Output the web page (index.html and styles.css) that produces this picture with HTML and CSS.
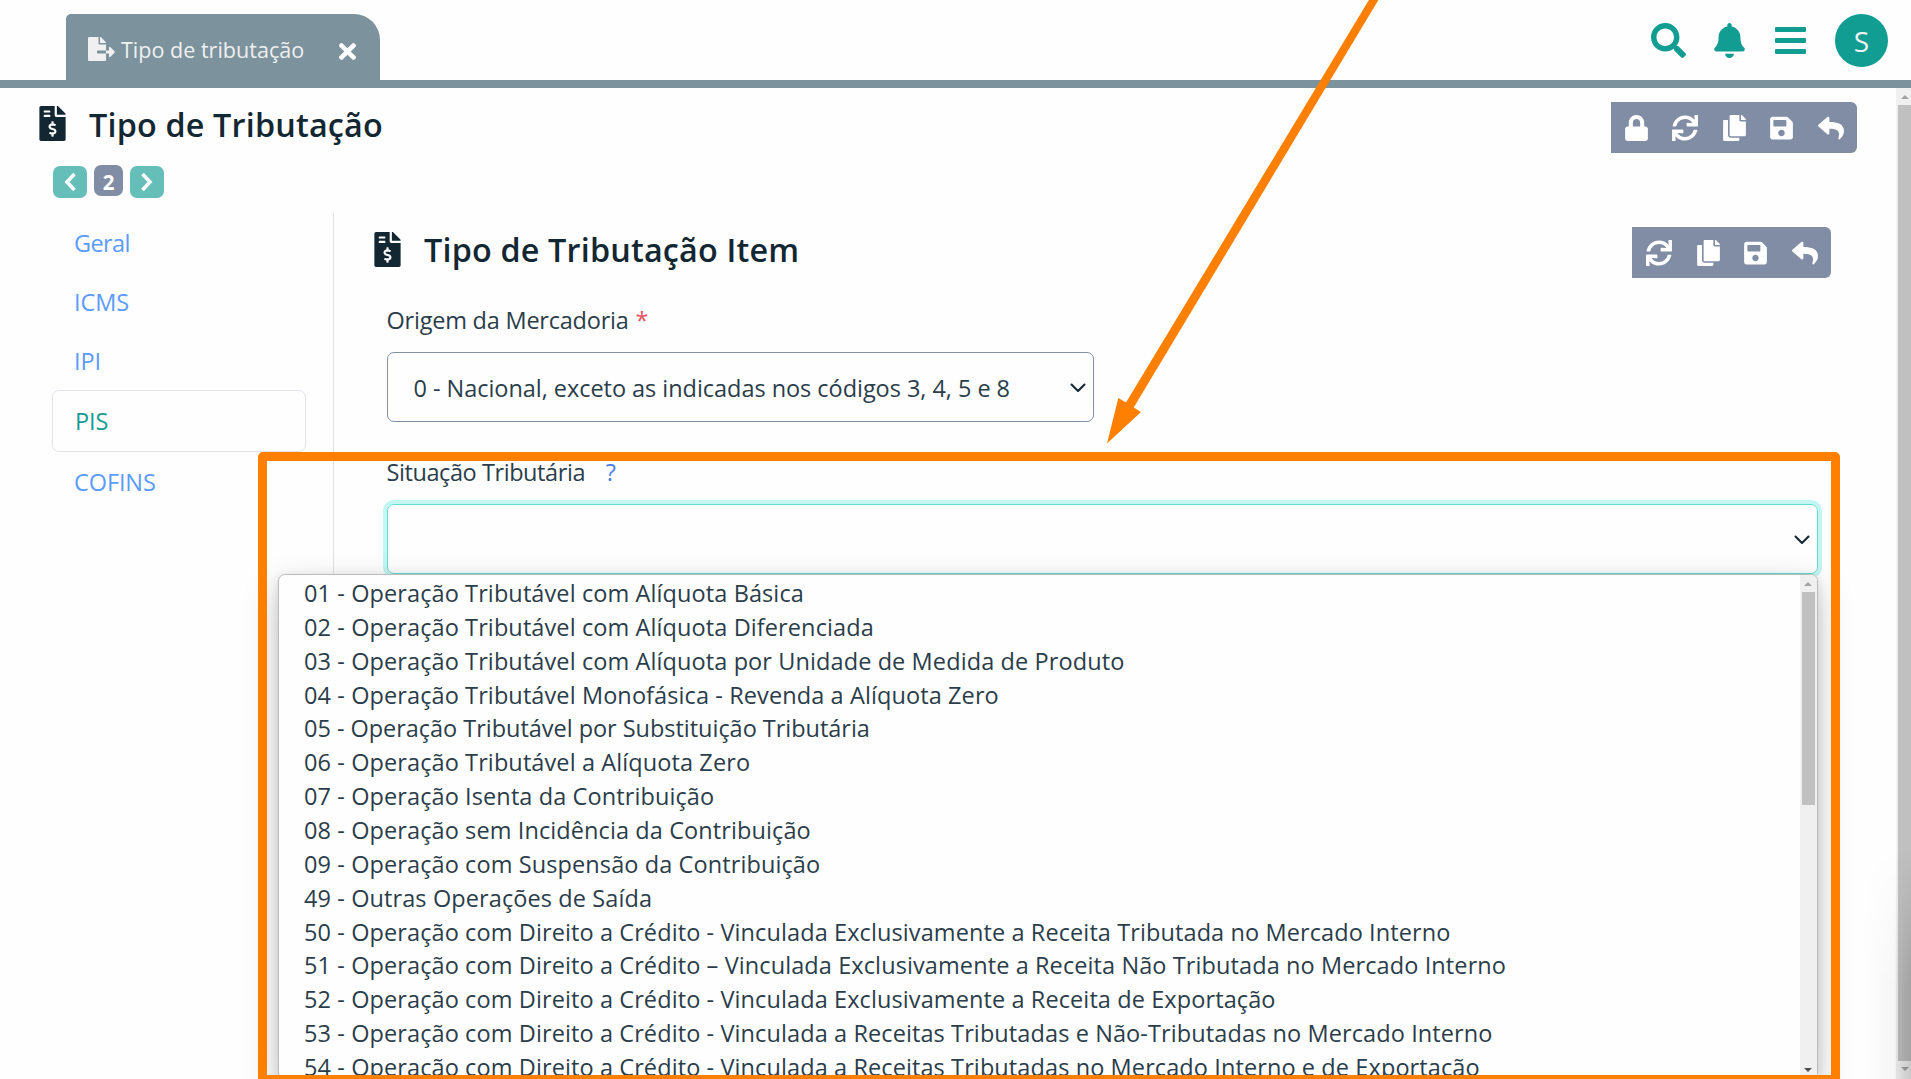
FILE: index.html
```
<!DOCTYPE html>
<html lang="pt-BR">
<head>
<meta charset="utf-8">
<title>Tipo de Tributação</title>
<link rel="stylesheet" href="styles.css">
</head>
<body>
<svg class="symbols" aria-hidden="true">
  <symbol id="i-export" viewBox="0 0 576 512"><path d="M384 121.900c0-6.300-2.500-12.400-7-16.900L279.100 7c-4.500-4.500-10.600-7-17-7H256v128h128zM571 308l-95.700-96.400c-10.100-10.100-27.400-3-27.400 11.300V288h-64v64h64v65.200c0 14.300 17.300 21.400 27.400 11.300L571 332c6.600-6.600 6.600-17.400 0-24zm-379 28v-32c0-8.800 7.200-16 16-16h176V160H248c-13.200 0-24-10.800-24-24V0H24C10.700 0 0 10.700 0 24v464c0 13.300 10.700 24 24 24h336c13.300 0 24-10.700 24-24V352H208c-8.800 0-16-7.200-16-16z"/></symbol>
  <symbol id="i-invoice" viewBox="0 0 384 512"><path d="M377 105L279.100 7c-4.500-4.500-10.600-7-17-7H256v128h128v-6.100c0-6.300-2.500-12.400-7-16.900zm-153 31V0H24C10.700 0 0 10.700 0 24v464c0 13.300 10.700 24 24 24h336c13.300 0 24-10.700 24-24V160H248c-13.200 0-24-10.800-24-24zM64 72c0-4.420 3.580-8 8-8h80c4.420 0 8 3.580 8 8v16c0 4.420-3.580 8-8 8H72c-4.420 0-8-3.580-8-8V72zm0 80v-16c0-4.420 3.580-8 8-8h80c4.420 0 8 3.580 8 8v16c0 4.420-3.580 8-8 8H72c-4.420 0-8-3.580-8-8zm144 263.880V440c0 4.420-3.580 8-8 8h-16c-4.420 0-8-3.580-8-8v-24.290c-11.290-.58-22.270-4.520-31.370-11.350-3.900-2.930-4.100-8.770-.57-12.140l11.750-11.210c2.770-2.640 6.890-2.760 10.130-.73 3.870 2.420 8.260 3.720 12.820 3.720h28.110c6.500 0 11.800-5.920 11.800-13.190 0-5.950-3.610-11.190-8.770-12.730l-45-13.500c-18.590-5.580-31.580-23.420-31.580-43.390 0-24.520 19.050-44.440 42.670-45.070V232c0-4.420 3.580-8 8-8h16c4.420 0 8 3.580 8 8v24.290c11.290.58 22.270 4.510 31.370 11.350 3.900 2.930 4.100 8.770.57 12.140l-11.750 11.210c-2.770 2.640-6.890 2.760-10.130.73-3.870-2.430-8.260-3.720-12.820-3.720h-28.110c-6.500 0-11.800 5.920-11.800 13.190 0 5.950 3.610 11.190 8.770 12.730l45 13.500c18.590 5.580 31.580 23.420 31.580 43.390 0 24.530-19.050 44.440-42.670 45.070z"/></symbol>
  <symbol id="i-times" viewBox="0 80 352 352"><path d="M242.720 256l100.070-100.070c12.280-12.280 12.280-32.190 0-44.480l-22.240-22.240c-12.280-12.280-32.190-12.280-44.480 0L176 189.280 75.930 89.210c-12.280-12.280-32.190-12.280-44.480 0L9.210 111.450c-12.280 12.280-12.280 32.190 0 44.480L109.280 256 9.210 356.070c-12.280 12.280-12.280 32.190 0 44.480l22.240 22.240c12.280 12.280 32.200 12.280 44.480 0L176 322.720l100.070 100.070c12.280 12.280 32.200 12.280 44.480 0l22.240-22.240c12.280-12.280 12.280-32.190 0-44.480z"/></symbol>
  <symbol id="i-search" viewBox="0 0 512 512"><path d="M505 442.700L405.300 343c-4.500-4.500-10.600-7-17-7H372c27.600-35.300 44-79.700 44-128C416 93.100 322.900 0 208 0S0 93.100 0 208s93.100 208 208 208c48.300 0 92.700-16.400 128-44v16.300c0 6.400 2.500 12.500 7 17l99.700 99.700c9.400 9.400 24.600 9.400 33.900 0l28.300-28.300c9.400-9.400 9.400-24.600.1-34zM208 336c-70.700 0-128-57.200-128-128 0-70.700 57.200-128 128-128 70.700 0 128 57.200 128 128 0 70.700-57.200 128-128 128z"/></symbol>
  <symbol id="i-bell" viewBox="0 0 448 512"><path d="M224 512c35.320 0 63.970-28.650 63.970-64H160.030c0 35.350 28.650 64 63.970 64zm215.390-149.710c-19.320-20.760-55.470-51.990-55.470-154.290 0-77.700-54.480-139.900-127.940-155.160V32c0-17.670-14.320-32-31.980-32s-31.980 14.330-31.980 32v20.840C118.560 68.100 64.080 130.300 64.080 208c0 102.300-36.150 133.530-55.470 154.290-6 6.450-8.660 14.160-8.610 21.710.11 16.400 12.980 32 32.100 32h383.800c19.120 0 32-15.600 32.100-32 .05-7.550-2.610-15.270-8.610-21.710z"/></symbol>
  <symbol id="i-bars" viewBox="0 0 31 27"><path d="M1 0h29q1 0 1 1v3q0 1-1 1H1q-1 0-1-1V1q0-1 1-1zM1 11h29q1 0 1 1v3q0 1-1 1H1q-1 0-1-1v-3q0-1 1-1zM1 22h29q1 0 1 1v3q0 1-1 1H1q-1 0-1-1v-3q0-1 1-1z"/></symbol>
  <symbol id="i-lock" viewBox="0 0 448 512"><path d="M400 224h-24v-72C376 68.200 307.800 0 224 0S72 68.200 72 152v72H48c-26.500 0-48 21.500-48 48v192c0 26.500 21.500 48 48 48h352c26.500 0 48-21.500 48-48V272c0-26.500-21.500-48-48-48zm-104 0H152v-72c0-39.700 32.300-72 72-72s72 32.300 72 72v72z"/></symbol>
  <symbol id="i-sync" viewBox="0 0 512 512"><path d="M440.650 12.570l4 82.770A247.160 247.160 0 0 0 255.830 8C134.730 8 33.910 94.920 12.290 209.820A12 12 0 0 0 24.090 224h49.050a12 12 0 0 0 11.670-9.260 175.910 175.910 0 0 1 317-56.940l-101.460-4.860a12 12 0 0 0-12.570 12v47.410a12 12 0 0 0 12 12H500a12 12 0 0 0 12-12V12a12 12 0 0 0-12-12h-47.370a12 12 0 0 0-11.980 12.570zM255.830 432a175.610 175.610 0 0 1-146-77.800l101.800 4.870a12 12 0 0 0 12.570-12v-47.400a12 12 0 0 0-12-12H12a12 12 0 0 0-12 12V500a12 12 0 0 0 12 12h47.350a12 12 0 0 0 12-12.600l-4.150-82.570A247.170 247.170 0 0 0 255.830 504c121.110 0 221.930-86.920 243.550-201.820a12 12 0 0 0-11.800-14.180h-49.050a12 12 0 0 0-11.670 9.260A175.860 175.860 0 0 1 255.830 432z"/></symbol>
  <symbol id="i-copy" viewBox="0 0 448 512"><path d="M320 448v40c0 13.255-10.745 24-24 24H24c-13.255 0-24-10.745-24-24V120c0-13.255 10.745-24 24-24h72v296c0 30.879 25.121 56 56 56h168zm0-344V0H152c-13.255 0-24 10.745-24 24v368c0 13.255 10.745 24 24 24h272c13.255 0 24-10.745 24-24V128H344c-13.200 0-24-10.800-24-24zm120.971-31.029L375.029 7.029A24 24 0 0 0 358.059 0H352v96h96v-6.059a24 24 0 0 0-7.029-16.970z"/></symbol>
  <symbol id="i-save" viewBox="0 0 448 512"><path d="M433.941 129.941l-83.882-83.882A48 48 0 0 0 316.118 32H48C21.490 32 0 53.490 0 80v352c0 26.510 21.490 48 48 48h352c26.510 0 48-21.490 48-48V163.882a48 48 0 0 0-14.059-33.941zM224 416c-35.346 0-64-28.654-64-64 0-35.346 28.654-64 64-64s64 28.654 64 64c0 35.346-28.654 64-64 64zm96-304.520V212c0 6.627-5.373 12-12 12H76c-6.627 0-12-5.373-12-12V108c0-6.627 5.373-12 12-12h228.520c3.183 0 6.235 1.264 8.485 3.515l3.480 3.480A11.996 11.996 0 0 1 320 111.480z"/></symbol>
  <symbol id="i-reply" viewBox="0 0 512 512"><path d="M8.309 189.836L184.313 37.851C199.719 24.546 224 35.347 224 56.015v80.053c160.629 1.839 288 34.032 288 186.258 0 61.441-39.581 122.309-83.333 154.132-13.653 9.931-33.111-2.533-28.077-18.631 45.344-145.012-21.507-183.510-176.590-185.742V360c0 20.700-24.300 31.453-39.687 18.164l-176.004-152c-11.071-9.562-11.086-26.753 0-36.328z"/></symbol>
  <symbol id="i-down" viewBox="0 0 16 10"><path d="M1.500 1.500L8 8l6.500-6.500" fill="none" stroke="currentColor" stroke-width="2.100" stroke-linecap="round" stroke-linejoin="round"/></symbol>
  <symbol id="i-left" viewBox="0 0 12 20"><path d="M10.500 2L3 10l7.500 8" fill="none" stroke="currentColor" stroke-width="3.600"/></symbol>
  <symbol id="i-right" viewBox="0 0 12 20"><path d="M1.500 2L9 10l-7.500 8" fill="none" stroke="currentColor" stroke-width="3.600"/></symbol>
</svg>

<header class="topbar">
  <div class="tab">
    <svg class="tab-icon"><use href="#i-export"/></svg>
    <span class="tab-label">Tipo de tributação</span>
    <svg class="tab-close"><use href="#i-times"/></svg>
  </div>
  <div class="actions">
    <svg class="ico-search"><use href="#i-search"/></svg>
    <svg class="ico-bell"><use href="#i-bell"/></svg>
    <svg class="ico-bars"><use href="#i-bars"/></svg>
    <span class="avatar">S</span>
  </div>
</header>

<div class="page">
  <main class="main">
    <div class="heading">
      <svg class="heading-icon"><use href="#i-invoice"/></svg>
      <h1 class="title">Tipo de Tributação</h1>
      <div class="toolbar">
        <svg class="w22"><use href="#i-lock"/></svg>
        <svg class="w26"><use href="#i-sync"/></svg>
        <svg class="w22"><use href="#i-copy"/></svg>
        <svg class="w22"><use href="#i-save"/></svg>
        <svg class="w26"><use href="#i-reply"/></svg>
      </div>
    </div>
    <div class="pager">
      <span class="pager-btn"><svg><use href="#i-left"/></svg></span>
      <span class="pager-num">2</span>
      <span class="pager-btn"><svg><use href="#i-right"/></svg></span>
    </div>
    <div class="columns">
      <nav class="side">
        <a class="side-link">Geral</a>
        <a class="side-link">ICMS</a>
        <a class="side-link">IPI</a>
        <a class="side-link active">PIS</a>
        <a class="side-link">COFINS</a>
      </nav>
      <section class="detail">
        <div class="heading sub">
          <svg class="heading-icon"><use href="#i-invoice"/></svg>
          <h2 class="title">Tipo de Tributação Item</h2>
          <div class="toolbar">
            <svg class="w26"><use href="#i-sync"/></svg>
            <svg class="w22"><use href="#i-copy"/></svg>
            <svg class="w22"><use href="#i-save"/></svg>
            <svg class="w26"><use href="#i-reply"/></svg>
          </div>
        </div>
        <div class="form">
          <div class="label">Origem da Mercadoria <span class="required">*</span></div>
          <div class="select short"><span class="value">0 - Nacional, exceto as indicadas nos códigos 3, 4, 5 e 8</span><svg class="caret"><use href="#i-down"/></svg></div>
          <div class="label second">Situação Tributária <span class="help">?</span></div>
          <div class="select focus"><svg class="caret"><use href="#i-down"/></svg>
            <div class="options">
              <ul class="option-list">
                <li>01 - Operação Tributável com Alíquota Básica</li>
                <li>02 - Operação Tributável com Alíquota Diferenciada</li>
                <li>03 - Operação Tributável com Alíquota por Unidade de Medida de Produto</li>
                <li>04 - Operação Tributável Monofásica - Revenda a Alíquota Zero</li>
                <li class="tight">05 - Operação Tributável por Substituição Tributária</li>
                <li>06 - Operação Tributável a Alíquota Zero</li>
                <li>07 - Operação Isenta da Contribuição</li>
                <li>08 - Operação sem Incidência da Contribuição</li>
                <li>09 - Operação com Suspensão da Contribuição</li>
                <li>49 - Outras Operações de Saída</li>
                <li>50 - Operação com Direito a Crédito - Vinculada Exclusivamente a Receita Tributada no Mercado Interno</li>
                <li>51 - Operação com Direito a Crédito – Vinculada Exclusivamente a Receita Não Tributada no Mercado Interno</li>
                <li>52 - Operação com Direito a Crédito - Vinculada Exclusivamente a Receita de Exportação</li>
                <li>53 - Operação com Direito a Crédito - Vinculada a Receitas Tributadas e Não-Tributadas no Mercado Interno</li>
                <li>54 - Operação com Direito a Crédito - Vinculada a Receitas Tributadas no Mercado Interno e de Exportação</li>
              </ul>
              <div class="scroll">
                <i class="up"></i><i class="thumb"></i><i class="down dark"></i>
              </div>
            </div>
          </div>
          <div class="select third"></div>
        </div>
      </section>
    </div>
  </main>
  <div class="scroll page-scroll">
    <i class="up"></i><i class="thumb"></i><i class="down"></i>
  </div>
</div>

<div class="edge-shade"></div>
<div class="frame"></div>
<svg class="arrow" viewBox="0 0 300 460"><path d="M269.500-1L26 402.600l-7.700-4.700L7 443.400l34-31.300-7.300-4.500L279-1z"/></svg>
</body>
</html>
```
FILE: styles.css
```
* { box-sizing: border-box; }

body {
  margin: 0;
  width: 1911px;
  height: 1079px;
  overflow: hidden;
  position: relative;
  display: flex;
  flex-direction: column;
  background: #fefefe;
  color: #2b3d4a;
  font: 23.5px/34px "Open Sans", "Noto Sans", sans-serif;
}

svg { display: block; fill: currentColor; flex: none; }
.symbols { position: absolute; width: 0; height: 0; }

/* Top bar */
.topbar {
  height: 88px;
  flex: none;
  display: flex;
  justify-content: space-between;
  padding: 14px 23px 0 66px;
  border-bottom: 8px solid #7c929d;
}
.tab {
  width: 314px;
  height: 66px;
  display: flex;
  align-items: center;
  padding: 4px 24px 0 22px;
  border-radius: 5px 26px 0 0;
  background: #7c929d;
  color: #f0f0f0;
}
.tab-icon { width: 27px; height: 24px; margin: 0 6px 0 0; }
.tab-label { font-size: 21.56px; flex: 1; white-space: nowrap; padding-top: 1px; }
.tab-close { width: 17px; height: 17px; color: #fff; margin-top: 4px; }
.actions { display: flex; align-items: flex-start; color: #129d92; }
.ico-search { width: 35px; height: 35px; margin: 9px 28px 0 0; }
.ico-bell { width: 31px; height: 35px; margin: 9px 30px 0 0; }
.ico-bars { width: 31px; height: 27px; margin: 13px 29px 0 0; }
.avatar {
  width: 53px;
  height: 53px;
  border-radius: 50%;
  background: #129d92;
  color: #f2f2f2;
  text-align: center;
  font-size: 28px;
  line-height: 55px;
}

/* Page */
.page { flex: 1; display: flex; min-height: 0; }
.main { flex: 1; min-width: 0; display: flex; flex-direction: column; padding: 14px 39px 0 39px; }
.heading { display: flex; height: 51px; align-items: flex-start; color: #132733; }
.heading-icon { width: 27px; height: 35px; margin: 4px 23px 0 0; }
.title {
  margin: 0;
  flex: 1;
  font-size: 32.34px;
  font-weight: 600;
  letter-spacing: .18px;
  line-height: 44px;
}
.toolbar {
  display: flex;
  align-items: center;
  height: 51px;
  gap: 24.6px;
  padding: 0 13px 0 14px;
  border-radius: 0 6px 6px 0;
  background: #818da4;
  color: #fff;
}
.toolbar svg { height: 26px; }
.w22 { width: 23px; }
.w26 { width: 26px; }

.pager { display: flex; gap: 7px; height: 60px; padding: 12px 0 0 14px; color: #fff; }
.pager-btn {
  display: flex;
  align-items: center;
  justify-content: center;
  width: 34px;
  height: 32px;
  margin-top: 1px;
  border-radius: 7px;
  background: #65beb7;
}
.pager-btn svg { width: 12px; height: 20px; }
.pager-num {
  width: 29px;
  height: 31px;
  border-radius: 7px;
  background: #818da4;
  text-align: center;
  font-size: 20.5px;
  font-weight: 700;
  line-height: 34px;
}

.columns { flex: 1; display: flex; min-height: 0; }
.side { width: 295px; padding: 0 27px 0 13px; border-right: 1px solid #dfe1e4; }
.side-link {
  display: block;
  height: 59px;
  padding-left: 22px;
  line-height: 61px;
  letter-spacing: -.1px;
  color: #5c9bff;
}
.side-link:first-child { letter-spacing: -.6px; }
.side-link.active {
  height: 62px;
  border: 1px solid #e2e4e9;
  border-radius: 7px;
  color: #159b91;
}

.detail { flex: 1; min-width: 0; padding: 14px 26px 0 40px; }
.sub .heading-icon { margin-top: 5px; }
.form { padding: 25px 13px 0; margin-left: -.5px; }
.label { height: 34px; letter-spacing: -.22px; white-space: nowrap; }
.label.second { margin-top: 33px; letter-spacing: -.42px; }
.required { color: #e85468; margin-left: 1px; }
.help { color: #4f7fe8; margin-left: 15px; }
.select {
  position: relative;
  display: flex;
  align-items: center;
  justify-content: space-between;
  width: 1431.5px;
  height: 70px;
  padding: 1px 7px 0 26px;
  border: 1px solid #8390a8;
  border-radius: 7px;
  color: #2b3d4a;
}
.select.short { width: 707px; margin-top: 15px; }
.select.focus {
  margin-top: 15px;
  padding-top: 2px;
  border: 1.5px solid #5fdfd4;
  box-shadow: 0 0 0 4px #c3f6f1;
  justify-content: flex-end;
  z-index: 2;
}
.select.third { margin-top: 81px; }
.value { letter-spacing: -.04px; white-space: nowrap; }
.caret { width: 16px; height: 10px; color: #132733; }

/* Option popup */
.options {
  position: absolute;
  top: 69px;
  left: -110px;
  width: 1540px;
  height: 505px;
  display: flex;
  border: 1px solid #bcbcbc;
  border-radius: 7px;
  background: #fefefe;
  box-shadow: 0 14px 38px rgba(0, 0, 0, .2), 0 3px 12px rgba(0, 0, 0, .12);
}
.option-list { flex: 1; margin: 0; padding: 2px 0 0 25.5px; list-style: none; }
.option-list li { height: 33.87px; line-height: 33.87px; letter-spacing: .1px; white-space: nowrap; }
.option-list .tight { letter-spacing: -.03px; }

/* Scroll bars */
.scroll {
  width: 17px;
  display: flex;
  flex-direction: column;
  align-items: center;
  background: #f0f0f0;
  border-radius: 0 6px 0 0;
}
.thumb { width: 13px; height: 213px; flex: none; background: #c0c0c0; }
.up, .down { border: 4px solid transparent; border-top: 0; border-bottom: 4px solid #a3a3a3; margin: 7px 0 6px; }
.down { margin: 6px 0; border-bottom: 0; border-top: 4px solid #a3a3a3; }
.down.dark { margin: 263px 0 0; border-top-color: #505050; }
.page-scroll { width: 15px; flex: none; border-radius: 0; padding-left: 2px; }
.page-scroll .thumb { height: auto; flex: 1; }
.page-scroll .down { margin-bottom: 8px; }

/* Annotations */
.edge-shade {
  position: absolute;
  right: 0;
  bottom: 0;
  width: 50px;
  height: 230px;
  background: linear-gradient(to left, rgba(0, 0, 0, .16), rgba(0, 0, 0, .03) 35%, transparent);
  mask-image: linear-gradient(to bottom, transparent, #000 60%);
  z-index: 3;
}
.frame {
  position: absolute;
  left: 258px;
  top: 452px;
  width: 1582px;
  height: 632px;
  border: 9px solid #ff8000;
  border-radius: 5px;
  z-index: 4;
}
.arrow {
  position: absolute;
  left: 1100px;
  top: 0;
  width: 300px;
  height: 460px;
  fill: #ff8000;
  z-index: 5;
}
```
